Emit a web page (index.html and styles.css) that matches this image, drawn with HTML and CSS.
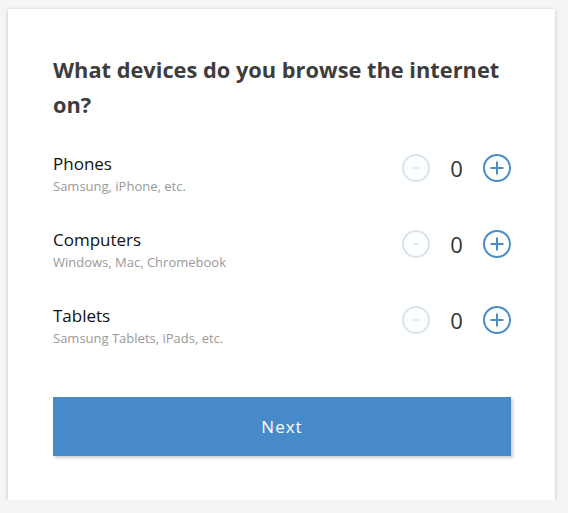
FILE: index.html
```html
<!DOCTYPE html>
<html lang="en">
<head>
    <meta charset="UTF-8">
    <meta name="viewport" content="width=device-width, initial-scale=1.0">
    <title>Devices</title>
    <link rel="stylesheet" href="styles.css">
</head>
<body>

    <div class="card">
        <h1 class="question">What devices do you browse the internet on?</h1>

        <div class="device-list">
            <div class="device-row">
                <div class="device-info">
                    <div class="device-name">Phones</div>
                    <div class="device-desc">Samsung, iPhone, etc.</div>
                </div>
                <div class="counter">
                    <button class="count-btn minus" disabled>
                        <svg width="28" height="28" viewBox="0 0 28 28"><circle cx="14" cy="14" r="13" fill="none" stroke="currentColor" stroke-width="2"/><line x1="11" y1="14" x2="17" y2="14" stroke="currentColor" stroke-width="1.5"/></svg>
                    </button>
                    <span class="count">0</span>
                    <button class="count-btn plus">
                        <svg width="28" height="28" viewBox="0 0 28 28"><circle cx="14" cy="14" r="13" fill="none" stroke="currentColor" stroke-width="2"/><line x1="7.5" y1="14" x2="20.5" y2="14" stroke="currentColor" stroke-width="2"/><line x1="14" y1="7.5" x2="14" y2="20.5" stroke="currentColor" stroke-width="2"/></svg>
                    </button>
                </div>
            </div>

            <div class="device-row">
                <div class="device-info">
                    <div class="device-name">Computers</div>
                    <div class="device-desc">Windows, Mac, Chromebook</div>
                </div>
                <div class="counter">
                    <button class="count-btn minus" disabled>
                        <svg width="28" height="28" viewBox="0 0 28 28"><circle cx="14" cy="14" r="13" fill="none" stroke="currentColor" stroke-width="2"/><line x1="11" y1="14" x2="17" y2="14" stroke="currentColor" stroke-width="1.5"/></svg>
                    </button>
                    <span class="count">0</span>
                    <button class="count-btn plus">
                        <svg width="28" height="28" viewBox="0 0 28 28"><circle cx="14" cy="14" r="13" fill="none" stroke="currentColor" stroke-width="2"/><line x1="7.5" y1="14" x2="20.5" y2="14" stroke="currentColor" stroke-width="2"/><line x1="14" y1="7.5" x2="14" y2="20.5" stroke="currentColor" stroke-width="2"/></svg>
                    </button>
                </div>
            </div>

            <div class="device-row">
                <div class="device-info">
                    <div class="device-name">Tablets</div>
                    <div class="device-desc">Samsung Tablets, iPads, etc.</div>
                </div>
                <div class="counter">
                    <button class="count-btn minus" disabled>
                        <svg width="28" height="28" viewBox="0 0 28 28"><circle cx="14" cy="14" r="13" fill="none" stroke="currentColor" stroke-width="2"/><line x1="11" y1="14" x2="17" y2="14" stroke="currentColor" stroke-width="1.5"/></svg>
                    </button>
                    <span class="count">0</span>
                    <button class="count-btn plus">
                        <svg width="28" height="28" viewBox="0 0 28 28"><circle cx="14" cy="14" r="13" fill="none" stroke="currentColor" stroke-width="2"/><line x1="7.5" y1="14" x2="20.5" y2="14" stroke="currentColor" stroke-width="2"/><line x1="14" y1="7.5" x2="14" y2="20.5" stroke="currentColor" stroke-width="2"/></svg>
                    </button>
                </div>
            </div>
        </div>

        <button class="next-btn">Next</button>
    </div>

</body>
</html>
```

FILE: styles.css
```css
body {
    font-family: "Open Sans", Arial, sans-serif;
    background-color: #f5f5f5;
    margin: 0;
    padding: 9px 0 0 8px;
}
.card {
    width: 547px;
    box-sizing: border-box;
    background-color: #fff;
    padding: 43px 44px 44px 45px;
    box-shadow: 0 1px 4px rgba(0,0,0,0.22);
}
.question {
    margin: 0;
    font-size: 21.8px;
    line-height: 35px;
    font-weight: 700;
    color: #3d3d3d;
}
.device-list {
    display: flex;
    flex-direction: column;
    gap: 33px;
    margin-top: 30px;
}
.device-row {
    display: flex;
    justify-content: space-between;
    align-items: flex-start;
}
.device-name {
    font-size: 17px;
    line-height: 24px;
    color: #111;
}
.device-desc {
    font-size: 13px;
    line-height: 18px;
    margin-top: 1px;
    color: #999;
}
.counter {
    display: flex;
    align-items: center;
    gap: 13px;
    margin-top: 2px;
}
.count-btn {
    width: 28px;
    height: 28px;
    padding: 0;
    border: none;
    background: none;
    cursor: pointer;
    display: block;
}
.count-btn svg {
    display: block;
}
.count-btn.minus {
    color: #d6e5f3;
    cursor: default;
}
.count-btn.plus {
    color: #4a8bca;
}
.count {
    width: 27px;
    text-align: center;
    font-size: 22px;
    line-height: 28px;
    color: #333;
}
.next-btn {
    display: block;
    width: 458px;
    height: 59px;
    margin-top: 50px;
    border: none;
    background-color: #478ac9;
    color: #fff;
    font-family: "Open Sans", Arial, sans-serif;
    font-size: 17px;
    letter-spacing: 1px;
    box-shadow: 2px 2px 3px rgba(0,0,0,0.2);
    cursor: pointer;
}
```
